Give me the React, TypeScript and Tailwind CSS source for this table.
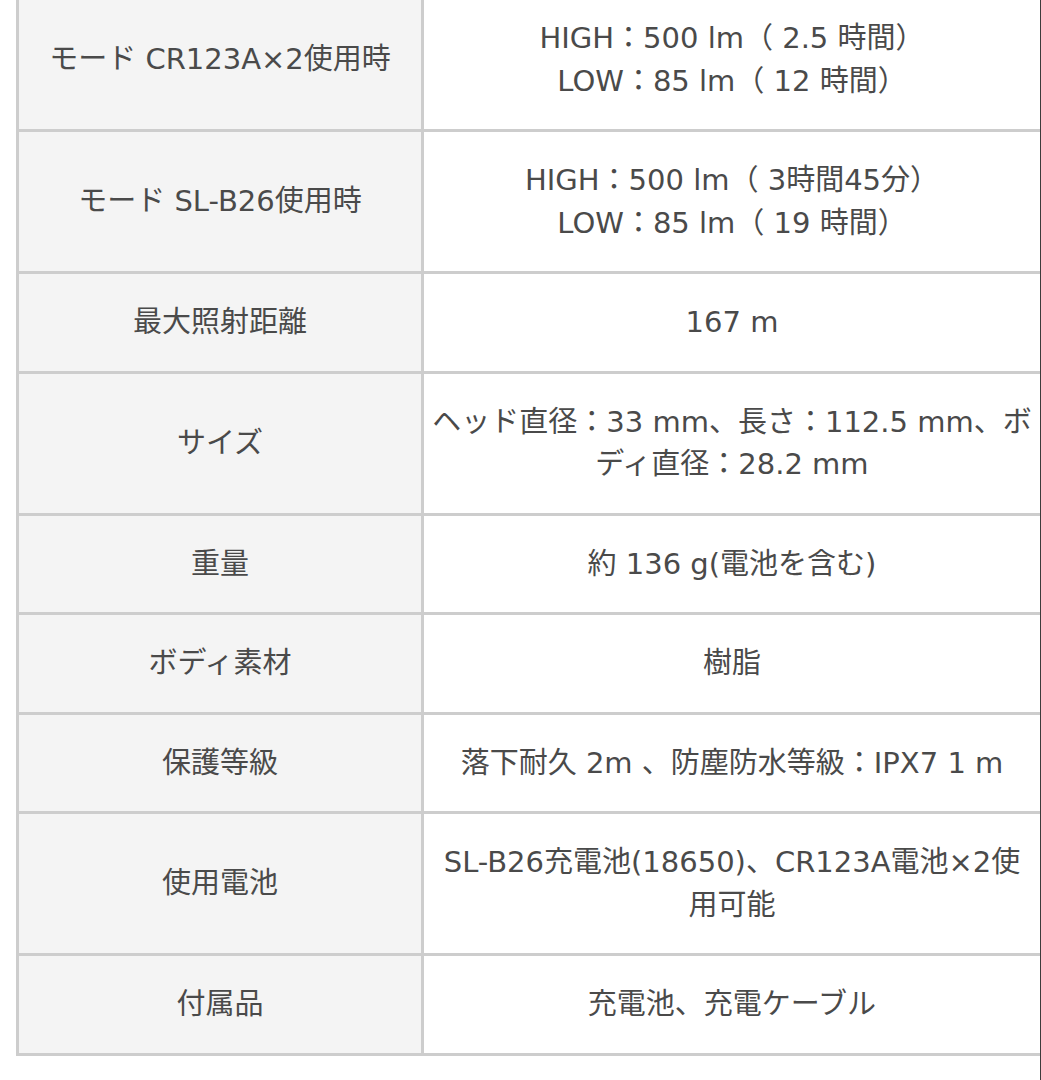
import React from 'react';

type Spec = { label: string; value: React.ReactNode };

const SPECS: Spec[] = [
  {
    label: 'モード CR123A×2使用時',
    value: (
      <>
        HIGH：500 lm（ 2.5 時間）
        <br />
        LOW：85 lm（ 12 時間）
      </>
    ),
  },
  {
    label: 'モード SL-B26使用時',
    value: (
      <>
        HIGH：500 lm（ 3時間45分）
        <br />
        LOW：85 lm（ 19 時間）
      </>
    ),
  },
  { label: '最大照射距離', value: '167 m' },
  {
    label: 'サイズ',
    value: (
      <>
        ヘッド直径：33 mm、長さ：112.5 mm、ボ
        <br />
        ディ直径：28.2 mm
      </>
    ),
  },
  { label: '重量', value: '約 136 g(電池を含む)' },
  { label: 'ボディ素材', value: '樹脂' },
  { label: '保護等級', value: '落下耐久 2m 、防塵防水等級：IPX7 1 m' },
  {
    label: '使用電池',
    value: (
      <>
        SL-B26充電池(18650)、CR123A電池×2使
        <br />
        用可能
      </>
    ),
  },
  { label: '付属品', value: '充電池、充電ケーブル' },
];

const SpecRow: React.FC<{ spec: Spec; first?: boolean }> = ({ spec, first }) => (
  <div className={`flex border-b-[3px] border-[#cdcdcd] ${first ? '-mt-[10px]' : ''}`}>
    <div className="w-[408px] shrink-0 flex items-center justify-center border-l-[3px] border-r-[3px] border-[#cdcdcd] bg-[#f4f4f4] px-2 py-[27px] text-center whitespace-nowrap">
      {spec.label}
    </div>
    <div className="flex-1 min-w-0 flex items-center justify-center bg-white px-1 py-[27px] text-center whitespace-nowrap">
      <div>{spec.value}</div>
    </div>
  </div>
);

export default function App() {
  return (
    <div
      className="w-[1041px] h-[1080px] overflow-hidden bg-white border-r border-[#3c3c3c] text-[#4a4a4a] text-[29px] leading-[42.5px] font-normal"
      style={{ fontFamily: '"DejaVu Sans", "Noto Sans CJK JP", sans-serif' }}
    >
      <div className="ml-[16px]">
        {SPECS.map((s, i) => (
          <SpecRow key={s.label} spec={s} first={i === 0} />
        ))}
      </div>
    </div>
  );
}
